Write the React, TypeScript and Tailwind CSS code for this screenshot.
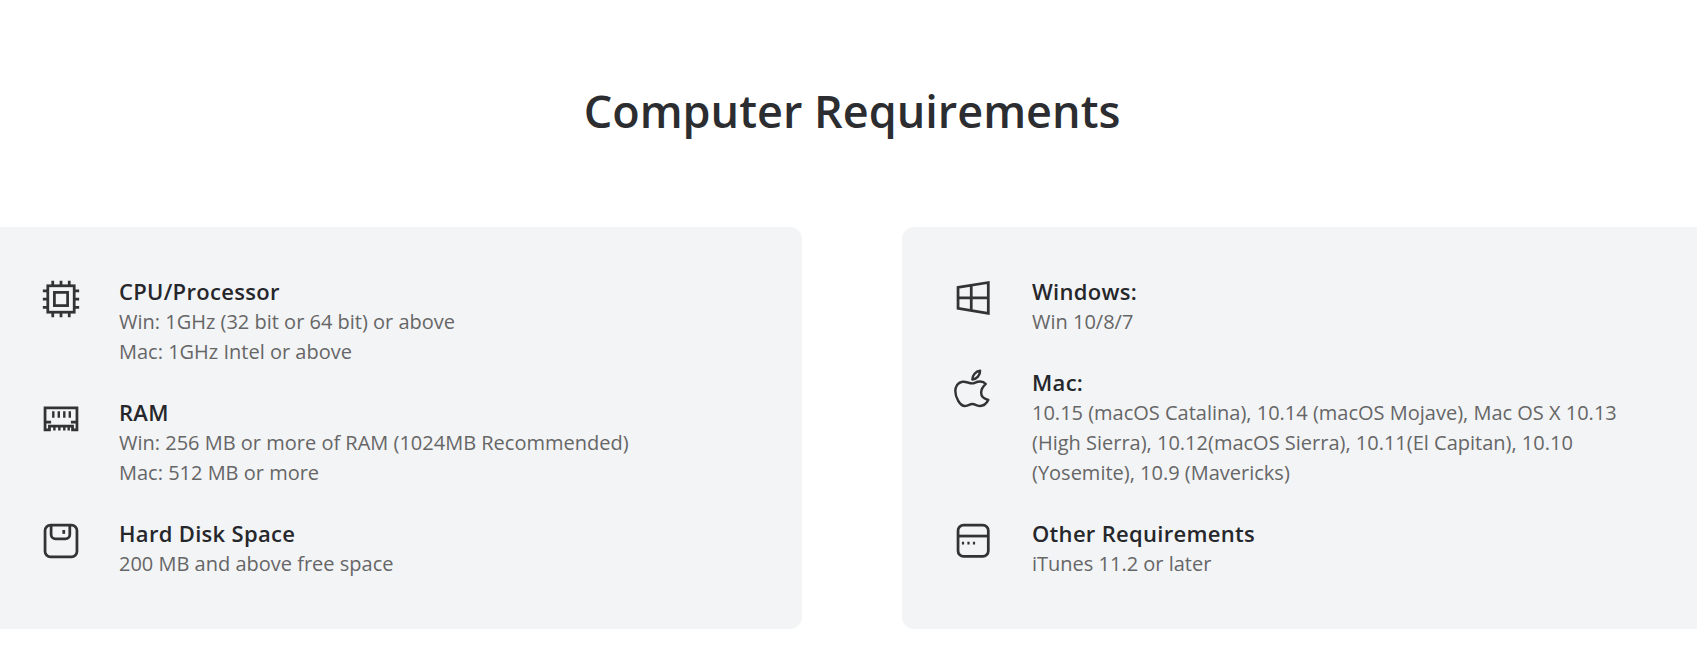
import type { ReactNode } from 'react';

function CpuIcon() {
  return (
    <svg viewBox="0 0 40 40" className="h-11 w-11" fill="none" stroke="#333" strokeWidth="2.500">
      <rect x="8" y="8" width="24" height="24" />
      <rect x="14" y="14" width="12" height="12" />
      <path d="M12.500 3.500V8M20 3.500V8M27.500 3.500V8M12.500 32v4.500M20 32v4.500M27.500 32v4.500M3.500 12.500H8M3.500 20H8M3.500 27.500H8M32 12.500h4.500M32 20h4.500M32 27.500h4.500" />
    </svg>
  );
}

function RamIcon() {
  return (
    <svg viewBox="0 0 40 40" className="h-11 w-11" fill="none" stroke="#333" strokeWidth="2.500">
      <path d="M5.500 29V9h29v20h-4v-3.500h-21V29z" />
      <path d="M5.500 22H11M29 22h5.500" />
      <path d="M13 12v6M18 12v6M23 12v6M28 12v6" strokeWidth="2.200" />
      <path d="M14 25.500v4M18.500 25.500v4M23 25.500v4M27 25.500v4" strokeWidth="2.200" />
    </svg>
  );
}

function DiskIcon() {
  return (
    <svg viewBox="0 0 40 40" className="h-11 w-11" fill="none" stroke="#333" strokeWidth="2.500">
      <rect x="5.500" y="5.500" width="29" height="29" rx="5" />
      <path d="M11 5.500V14a4 4 0 0 0 4 4h9a4 4 0 0 0 4-4V5.500" />
      <path d="M22.500 10v3.500" />
    </svg>
  );
}

function WindowsIcon() {
  return (
    <svg viewBox="0 0 40 40" className="h-11 w-11" fill="none" stroke="#333" strokeWidth="2.500">
      <path d="M5.500 9.500L33 5v28L5.500 28.500zM17.500 7.500v23.500M5.500 19H33" />
    </svg>
  );
}

function AppleIcon() {
  return (
    <svg viewBox="0 0 40 40" className="h-11 w-11" fill="none" stroke="#333" strokeWidth="2.200" strokeLinejoin="round">
      <g transform="translate(1 1)">
        <path d="M17.500 13C14 13 12 11 8.500 11.500C4 12 2 16.500 2 20C2 26 6.500 33.500 10.500 33.500C13 33.500 15 31.800 17.500 31.800C20 31.800 22 33.500 24.500 33.500C27.500 33.500 30.500 31 32 28C28 27 25.500 25 25.500 21.500C25.500 18 27.500 15.500 29.700 13.500C27.500 11 24.500 11 22.500 11.500C20.500 12 19 13 17.500 13z" />
        <path d="M17.500 9.500C17.500 5.500 20.500 2 24.500 1.500C24.800 5.500 21.500 9 17.500 9.500z" />
      </g>
    </svg>
  );
}

function WindowIcon() {
  return (
    <svg viewBox="0 0 40 40" className="h-11 w-11" fill="none" stroke="#333" strokeWidth="2.500">
      <rect x="5.500" y="5.500" width="27.500" height="28.500" rx="5" />
      <path d="M5.500 15.500H33" />
      <path d="M9 22h2M14 22h2M19 22h2" />
    </svg>
  );
}

function Row({ icon, title, lines }: { icon: ReactNode; title: string; lines: string[] }) {
  return (
    <div className="flex gap-[36px]">
      <div className="w-11 shrink-0">{icon}</div>
      <div>
        <h3 className="pb-[2px] text-[22px] leading-[28px] font-semibold tracking-[.3px] text-[#26272b]">{title}</h3>
        {lines.map((line) => (
          <p key={line} className="text-[20px] leading-[30px] text-[#666]">
            {line}
          </p>
        ))}
      </div>
    </div>
  );
}

export default function App() {
  return (
    <div className="h-[665px] w-full overflow-hidden bg-white font-['Open_Sans',sans-serif]">
      <div className="-ml-3 w-[1728px]">
        <h2 className="pt-[79px] text-center text-[45px] leading-[64px] font-semibold text-[#2c2d30]">
          Computer Requirements
        </h2>
        <div className="mt-[84px] flex gap-[100px]">
          <div className="flex h-[402px] w-[814px] flex-col gap-[31px] rounded-xl bg-[#f3f4f6] pt-[50px] pl-[51px]">
            <Row
              icon={<CpuIcon />}
              title="CPU/Processor"
              lines={['Win: 1GHz (32 bit or 64 bit) or above', 'Mac: 1GHz Intel or above']}
            />
            <Row
              icon={<RamIcon />}
              title="RAM"
              lines={['Win: 256 MB or more of RAM (1024MB Recommended)', 'Mac: 512 MB or more']}
            />
            <Row icon={<DiskIcon />} title="Hard Disk Space" lines={['200 MB and above free space']} />
          </div>
          <div className="flex h-[402px] w-[814px] flex-col gap-[31px] rounded-xl bg-[#f3f4f6] pt-[50px] pl-[50px]">
            <Row icon={<WindowsIcon />} title="Windows:" lines={['Win 10/8/7']} />
            <Row
              icon={<AppleIcon />}
              title="Mac:"
              lines={[
                '10.15 (macOS Catalina), 10.14 (macOS Mojave), Mac OS X 10.13',
                '(High Sierra), 10.12(macOS Sierra), 10.11(El Capitan), 10.10',
                '(Yosemite), 10.9 (Mavericks)',
              ]}
            />
            <Row icon={<WindowIcon />} title="Other Requirements" lines={['iTunes 11.2 or later']} />
          </div>
        </div>
      </div>
    </div>
  );
}
